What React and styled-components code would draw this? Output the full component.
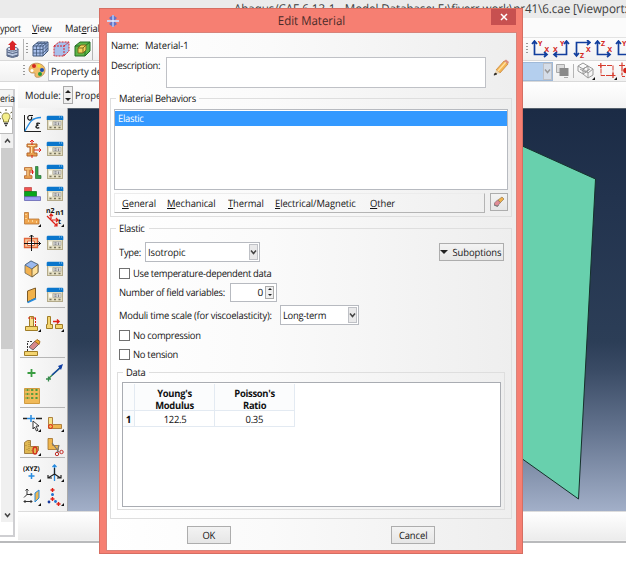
import React from 'react';
import styled, { createGlobalStyle } from 'styled-components';

const Global = createGlobalStyle`
  * { box-sizing: border-box; }
  body { margin: 0; background: #fff; overflow: hidden; }
  fieldset { min-width: 0; }
`;

const Screen = styled.div`
  position: relative;
  width: 626px;
  height: 566px;
  overflow: hidden;
  background: #fff;
  color: #141414;
  font: 10px/14px 'Open Sans', 'Noto Sans', sans-serif;
  text-rendering: geometricPrecision;
  letter-spacing: -0.2px;
  white-space: nowrap;
`;

/* Open Sans is wider than the UI face, so labels are condensed slightly. */
const Label = styled.span`
  display: inline-block;
  flex: none;
  width: ${(p) => (p.$w ? `${p.$w}px` : 'auto')};
  letter-spacing: ${(p) => p.$ls ?? -0.3}px;
  transform: scaleX(${(p) => p.$sx || 0.94});
  transform-origin: ${(p) => (p.$center ? 'center' : 'left')};
`;

const LabelSlot = styled.div`
  flex: none;
  width: ${(p) => p.$w}px;
`;

const MainWindow = styled.div`
  display: flex;
  flex-direction: column;
  height: 543px;
  border-bottom: 2px solid #b9babc;
  background: #fff;
`;

const TitleBar = styled.div`
  height: 18px;
  padding-left: 234px;
  background: #ebebeb;
  color: #3d3d3d;
  font-size: 12.2px;
  line-height: 18px;
`;

const MenuBar = styled.div`
  display: flex;
  align-items: center;
  height: 20px;
  padding-top: 1px;
  background: #fbfbfb;
  border-bottom: 1px solid #e3e3e3;
`;

const Spacer = styled.div`
  flex: none;
  width: ${(p) => p.$w}px;
`;

const Toolbar = styled.div`
  display: flex;
  align-items: center;
  height: ${(p) => p.$h}px;
  padding-left: ${(p) => p.$left || 0}px;
  background: linear-gradient(#fdfdfd, #f1f1f1);
  border-bottom: 1px solid #d9d9d9;
`;

const Grip = styled.div`
  flex: none;
  width: 2px;
  height: 12px;
  background: repeating-linear-gradient(#999 0 1px, transparent 1px 3px);
`;

const Divider = styled.div`
  flex: none;
  width: 1px;
  height: ${(p) => p.$h || 14}px;
  background: #b5b5b5;
`;

const ModuleSelect = styled.div`
  flex: none;
  width: 60px;
  height: 19px;
  padding-left: 2px;
  border: 1px solid #c4c6cc;
  background: #fff;
  line-height: 17px;
`;

const BlueCombo = styled.div`
  display: flex;
  justify-content: flex-end;
  flex: none;
  width: 32px;
  height: 19px;
  border: 1px solid #9fb9d8;
  background: #b4cfee;
`;

const ComboArrow = styled.div`
  display: flex;
  align-items: center;
  justify-content: center;
  flex: none;
  width: 9px;
  border: 1px solid #bfc1c6;
  background: ${(p) => (p.$muted ? '#d5dde8' : '#e9e9ea')};
`;

const Body = styled.div`
  display: flex;
  flex: 1;
  min-height: 0;
`;

const TreePane = styled.div`
  flex: none;
  display: flex;
  flex-direction: column;
  width: 15px;
  height: 448px;
  margin-top: 7px;
  border-right: 2px solid #cfcfd2;
  border-bottom: 2px solid #cfcfd2;
  background: #fff;
`;

const TreeTab = styled.div`
  height: 18px;
  padding-top: 1px;
  border-top: 1px solid #cfcfcf;
  border-bottom: 1px solid #c6c6c6;
  background: #f3f3f3;
`;

const BulbBox = styled.div`
  height: 27px;
  padding-top: 2px;
  border-bottom: 1px solid #bdbdbd;
  border-right: 1px solid #bdbdbd;
`;

const ScrollButton = styled.div`
  display: flex;
  align-items: center;
  justify-content: center;
  height: 14px;
  margin: 0 0 ${(p) => p.$mb || 0}px 1px;
  background: #f0f0f0;
`;

const ScrollTrack = styled.div`
  flex: 1;
  margin-left: 1px;
  background: #f0f0f0;
`;

const ScrollThumb = styled.div`
  height: 201px;
  background: #cdcdcd;
`;

const Workspace = styled.div`
  flex: 1;
  min-width: 0;
  margin-left: 3px;
  background: linear-gradient(90deg, #fcfcfc, #f0f0f0 60px, #f2f2f2);
`;

const ModuleRow = styled.div`
  display: flex;
  align-items: center;
  height: 26px;
  padding-left: 7px;
  background: linear-gradient(#fff, #f3f3f3);
`;

const Spin = styled.div`
  display: flex;
  flex-direction: column;
  align-items: center;
  justify-content: space-around;
  flex: none;
  width: ${(p) => p.$w || 10}px;
  height: ${(p) => p.$h || 18}px;
  border: 1px solid #aaa;
  background: #efefef;
`;

const Caret = styled.div`
  width: 0;
  height: 0;
  border: ${(p) => p.$s || 2}px solid transparent;
  border-width: ${(p) => (p.$up ? `0 ${p.$s || 2}px ${p.$s || 2}px` : `${p.$s || 2}px ${p.$s || 2}px 0`)};
  border-color: ${(p) => (p.$up ? 'transparent transparent #222' : '#222 transparent transparent')};
`;

const Canvas = styled.div`
  display: flex;
  height: 403px;
`;

const Toolbox = styled.div`
  flex: none;
  width: 50px;
  padding: 2px 2px 0 2px;
  border-right: 1px solid #aaa;
  background: linear-gradient(90deg, #fbfbfb, #eee);
`;

const ToolRow = styled.div`
  display: grid;
  grid-template-columns: 23px 22px;
  align-items: center;
  height: ${(p) => p.$h}px;
  padding-left: 3px;
`;

const ToolSeparator = styled.div`
  height: 1px;
  background: #b6b6b6;
`;

const Viewport = styled.div`
  flex: 1;
  border-top: 1px solid #55606c;
  background: linear-gradient(#1b2b45, #22334e 22%, #2c3e57 58%, #3a4b65 65%, #64748f 80%, #a2afc8);
`;

const StatusStrip = styled.div`
  height: 29px;
  border-top: 1px solid #dcdcdc;
  background: linear-gradient(#fff, #ececec);
`;

const Dialog = styled.div`
  position: absolute;
  left: 99px;
  top: 8px;
  width: 424px;
  height: 546px;
  display: flex;
  flex-direction: column;
  padding: 0 5px 5px 6px;
  border: 1px solid #d66e62;
  background: #f67f72;
`;

const DialogTitle = styled.div`
  display: grid;
  grid-template-columns: 26px 1fr 26px;
  align-items: start;
  height: 23px;
  color: #4a2b29;
  font-size: 12.2px;
  line-height: 23px;
  text-align: center;
`;

const TitleIcon = styled.div`
  display: flex;
  padding-top: 5px;
`;

const CloseButton = styled.div`
  display: flex;
  align-items: center;
  justify-content: center;
  width: 25px;
  height: 16px;
  background: #c75050;
`;

const DialogBody = styled.div`
  flex: 1;
  display: flex;
  flex-direction: column;
  padding: 5px 4px 0 3px;
  border: 1px solid #d8837a;
  background: linear-gradient(90deg, #fff, #fafafa 40%, #eee);
`;

const FormRow = styled.div`
  display: flex;
  align-items: ${(p) => p.$align || 'center'};
  height: ${(p) => p.$h}px;
  padding-left: ${(p) => p.$left || 0}px;
`;

const TextArea = styled.div`
  flex: none;
  width: 320px;
  height: 31px;
  border: 1px solid #bfc1c6;
  background: #fff;
`;

const PencilSlot = styled.div`
  padding: 7px 0 0 7px;
`;

const Group = styled.fieldset`
  flex: none;
  height: ${(p) => p.$h}px;
  margin: ${(p) => p.$m || '0'};
  padding: 0 3px;
  border: 1px solid #dedede;
`;

const Legend = styled.legend`
  width: ${(p) => p.$w}px;
  height: 14px;
  margin-left: 2px;
  padding: 0 2px 0 3px;
`;

const ListBox = styled.div`
  height: 81px;
  margin-top: 4px;
  padding: 1px 0;
  border: 1px solid #b7bac0;
  background: #fff;
`;

const SelectedItem = styled.div`
  height: 15px;
  padding-left: 3px;
  background: #3399ff;
  color: #fff;
`;

const BehaviorBar = styled.div`
  display: flex;
  gap: 5px;
  height: 20px;
  margin-top: 3px;
`;

const BehaviorMenu = styled.div`
  display: flex;
  align-items: center;
  width: 371px;
  padding-left: 7px;
  border: 1px solid #ececec;
  border-right-color: #b4b4b4;
  border-bottom-color: #b4b4b4;
`;

const Button = styled.div`
  display: flex;
  align-items: center;
  justify-content: center;
  flex: none;
  width: ${(p) => p.$w}px;
  height: ${(p) => p.$h || 18}px;
  margin-left: ${(p) => p.$ml || 0}px;
  gap: 3px;
  border: 1px solid #adadad;
  background: linear-gradient(#f3f3f3, #e6e6e6);
`;

const Combo = styled.div`
  display: flex;
  justify-content: space-between;
  flex: none;
  width: ${(p) => p.$w}px;
  height: 20px;
  padding: 1px 1px 1px 2px;
  border: 1px solid #b7bac0;
  background: #fff;
  line-height: 16px;
`;

const SpinInput = styled.div`
  display: flex;
  align-items: center;
  justify-content: flex-end;
  gap: 2px;
  width: 47px;
  height: 19px;
  padding-right: 2px;
  border: 1px solid #b7bac0;
  background: #fff;
`;

const CheckBox = styled.div`
  flex: none;
  width: 11px;
  height: 11px;
  margin-right: 3px;
  border: 1px solid #707070;
  background: #fff;
`;

const TableBox = styled.div`
  height: 125px;
  margin: 3px 0 0 1px;
  padding: 1px 0;
  border: 1px solid #a9acb2;
  background: #fff;
`;

const Grid = styled.div`
  display: grid;
  grid-template-columns: 12px 80px 80px;
  grid-template-rows: 27px 16px;
  text-align: center;
`;

const Cell = styled.div`
  padding-top: ${(p) => (p.$head && !p.$row ? 2.5 : 1)}px;
  border-right: 1px solid #e3eaf2;
  border-bottom: 1px solid #e3eaf2;
  background: ${(p) => (p.$head ? '#fbfcfd' : '#fff')};
  color: #111;
  font-weight: ${(p) => (p.$head ? 700 : 400)};
  line-height: ${(p) => (p.$head && !p.$row ? 12 : 14)}px;
`;

const Svg = styled.svg`
  display: block;
  flex: none;
  margin-left: ${(p) => p.$ml || 0}px;
`;

const Icon = ({ w = 18, h = 18, ml, children }) => (
  <Svg width={w} height={h} viewBox={`0 0 ${w} ${h}`} $ml={ml} fill="none">
    {children}
  </Svg>
);

const Chevron = ({ up, color = '#444' }) => (
  <Icon w={7} h={6}>
    <path d={up ? 'M1 4.5L3.5 1.5L6 4.5' : 'M1 1.5L3.5 4.5L6 1.5'} stroke={color} strokeWidth="1.5" />
  </Icon>
);

const Corner = () => <path d="M18 15v3h-3z" fill="#111" />;

const Manager = () => (
  <Icon>
    <path d="M1 4h16v12H1z" fill="#b3aa8a" />
    <path d="M2 6h14v9H2z" fill="#e3ddc2" />
    <path d="M1.500 1.800h15l.8 1V6H.7V2.800z" fill="#0a76cc" />
    <path d="M13 3h1M15 3h1" stroke="#8cc4f0" />
    <path d="M3 7.500h3v4H3z" fill="#fbfaf0" />
    <path d="M7 7.500h8v4H7z" fill="#d5d5d3" stroke="#a8a698" strokeWidth=".6" />
    <path d="M8.500 8.800h2M12.500 8.500v2.500M8.500 10.300h2" stroke="#85858a" />
    <path d="M3.500 13.500h2M8 13.500h2M12.500 13.500h2" stroke="#77735c" strokeWidth="1.500" />
  </Icon>
);

const SigmaIcon = () => (
  <Icon w={20} h={20}>
    <path d="M1.500 2v16.500H18" stroke="#222" />
    <path d="M2 18C7 9 8 5 18 4.500" stroke="#248be0" strokeWidth="1.3" />
    <path d="M10 2.500H6.500a2 2.300 0 1 0 2 1.200" stroke="#111" strokeWidth="1.200" />
    <path d="M17 10.500c-4-1.500-4 1.500-1.500 1.700c-4 .3-3 4 .8 2.500" stroke="#111" strokeWidth="1.300" />
  </Icon>
);

const BeamIcon = ({ load }) => (
  <Icon w={19}>
    <g transform={load ? '' : 'translate(-1.500 1) scale(.75 .9)'}>
      <path d="M4 4h10v3h-3v6h3v3H4v-3h3V7H4z" fill="#e8a050" stroke="#b5652a" />
      <path d="M5 5.500h7M8.500 7v6" stroke="#ffe1a8" />
    </g>
    {load ? (
      <path d="M9 5V0M7 2l2-2 2 2M11 10h7M16 8l2 2-2 2M9 15v3" stroke="#df2118" />
    ) : (
      <>
        <path d="M7 9h4M9.500 7v4" stroke="#df2118" />
        <path d="M12.500 3.500h2.500V12.500H18v3h-5.500z" fill="#36a14a" stroke="#276e35" strokeWidth=".7" />
      </>
    )}
  </Icon>
);

const LayersIcon = () => (
  <Icon w={19}>
    <path d="M1.500 2.500h7v4h-7z" fill="#ef5550" stroke="#b44" strokeWidth=".7" />
    <path d="M1.500 6.500h12v5h-12z" fill="#08a51b" stroke="#087418" strokeWidth=".7" />
    <path d="M1.500 11.700h16v3.800h-16z" fill="#9c9cf5" stroke="#5757a7" strokeWidth=".7" />
  </Icon>
);

const AngleIcon = () => (
  <Icon>
    <path d="M1.500 3.500h4V10H16v5H1.500z" fill="#efa54e" stroke="#b87333" strokeWidth=".8" />
    <path d="M3 5v1M3 9v1M5 12h1M9 12h1M13 13h1" stroke="#ffe4af" strokeWidth="1.500" />
    <Corner />
  </Icon>
);

const MiniText = styled.text`
  fill: ${(p) => p.$c || '#111'};
  font: 700 ${(p) => p.$s || 7}px 'Noto Sans', sans-serif;
  letter-spacing: 0;
`;

const NormalIcon = () => (
  <Icon w={19} h={21}>
    <MiniText x="0" y="6">n2</MiniText>
    <MiniText x="9.500" y="8">n1</MiniText>
    <MiniText x="12" y="17">t</MiniText>
    <path d="M1 9l10 10M11 16v3H8M5 12V7M3.500 9L5 7l2 2M5 13h7M10 11l2 2-2 2" stroke="#df2118" strokeWidth="1.200" />
    <path d="M18 17v3h-3z" fill="#111" />
  </Icon>
);

const CrossBoxIcon = () => (
  <Icon w={19}>
    <path d="M1.500 4.500h13v9h-13z" fill="#f6c89c" stroke="#e2673d" strokeWidth="1.300" />
    <path d="M4.500 7h7v4.500h-7z" fill="#fff" stroke="#e2673d" />
    <path d="M8.500 17V1M6.500 3l2-2 2 2M1 9.500h17M15.500 7.500l2 2-2 2" stroke="#111" />
  </Icon>
);

const CubeIcon = () => (
  <Icon>
    <path d="M2 5l6-4 7 3.500v8L9 17l-7-4z" fill="#f3b250" stroke="#6b6a5d" strokeWidth=".8" />
    <path d="M2 5l6-4 7 3.500L9 9z" fill="#9bb9ee" stroke="#49698f" strokeWidth=".8" />
    <path d="M9 9l6-4.500v8L9 17z" fill="#ffe19b" stroke="#6b542d" strokeWidth=".8" />
  </Icon>
);

const ShellIcon = () => (
  <Icon>
    <path d="M4.500 5l8-3v10l-8 4z" fill="#f1b24b" stroke="#7d5b28" />
    <path d="M4.500 16.500l8.500-4" stroke="#258be0" strokeWidth="1.800" />
  </Icon>
);

const StampIcon = () => (
  <Icon>
    <path d="M2.500 12.500h12v4h-12z" fill="#f4d570" stroke="#a07d27" />
    <path d="M6.500 2.500h4v10h-4z" fill="#f6df8a" stroke="#a07d27" />
    <path d="M5 4h8M12.500 4v8" stroke="#df2118" strokeDasharray="2 1" />
    <Corner />
  </Icon>
);

const MoveIcon = () => (
  <Icon>
    <path d="M1.500 2.500h3v8h2v4h-6v-4h1zM9.500 10.500h7v4h-7z" fill="#f4d570" stroke="#a07d27" />
    <path d="M7 7.500h6M11 5.500l2 2-2 2" stroke="#df2118" strokeWidth="1.500" />
    <Corner />
  </Icon>
);

const EraseStampIcon = () => (
  <Icon>
    <path d="M1.500 12.500h13v4h-13z" fill="#f4d570" stroke="#a07d27" />
    <path d="M4.500 12V2.500h5" stroke="#333" strokeDasharray="2 1" />
    <path d="M6 8l6-6 4 3-6 6z" fill="#d6888a" stroke="#6e6569" />
    <path d="M12 2.500l2-2 3 2-1 3z" fill="#f1aa34" stroke="#a46c20" />
  </Icon>
);

const PlusIcon = () => (
  <Icon>
    <path d="M8.500 5v8M4.500 9h8" stroke="#3a9d42" strokeWidth="1.800" />
  </Icon>
);

const LineIcon = () => (
  <Icon>
    <path d="M2 15L15 3M0 15h5M2.500 12.500v5" stroke="#368b4c" strokeWidth="1.300" />
    <path d="M6 11L15 3" stroke="#1646a1" strokeWidth="1.500" />
    <path d="M17 0l-5 2 3 4z" fill="#123fa4" />
  </Icon>
);

const MatrixIcon = () => (
  <Icon>
    <path d="M1.500 .500h15v15h-15z" fill="#f0b958" stroke="#d09c41" />
    <path d="M4.500 1v10M9 1v10M13.500 1v10" stroke="#4c9b3b" strokeWidth="1.800" strokeDasharray="2 2" />
    <path d="M2 2h14M2 6h14M2 10h14" stroke="#73a045" strokeWidth=".8" strokeDasharray="1 1" />
  </Icon>
);

const PickIcon = () => (
  <Icon w={19}>
    <path d="M0 4.500h4M13 4.500h6" stroke="#222" strokeWidth="1.500" />
    <path d="M4 4.500h8M8 1v7" stroke="#278be0" strokeWidth="1.500" />
    <path d="M10 7l6 5-3 .2 2 4-1.500.8-2-4-1.500 2z" fill="#fff" stroke="#222" strokeWidth=".9" />
    <Corner />
  </Icon>
);

const BracketIcon = () => (
  <Icon>
    <path d="M2.500 3.500h4v7h9v4h-13z" fill="#efb64f" stroke="#a06e29" strokeWidth=".8" />
    <path d="M3 4h3v6H3z" fill="#f6e48b" />
    <circle cx="4.500" cy="12.500" r="2" stroke="#df2118" />
    <Corner />
  </Icon>
);

const SolidIcon = () => (
  <Icon>
    <path d="M1.500 4.500l3-2h3v6h8v4l-3 3h-11z" fill="#e0b852" stroke="#8f692b" strokeWidth=".8" />
    <path d="M6 4v9M3 7v1M4 11v1M9 12v1" stroke="#a98535" strokeDasharray="1 1" />
    <ellipse cx="12" cy="12.500" rx="2" ry="3.500" stroke="#d4321f" strokeWidth="1.400" />
    <Corner />
  </Icon>
);

const CutIcon = () => (
  <Icon>
    <path d="M2 .500h4.500v7h6v4H2z" fill="#efb64f" stroke="#a06e29" strokeWidth=".8" />
    <path d="M6 5l7 9M13 7l-2 8" stroke="#777" strokeWidth="1.200" />
    <circle cx="11" cy="16" r="1.700" stroke="#c22d28" />
    <circle cx="15.500" cy="14" r="1.700" stroke="#c22d28" />
  </Icon>
);

const XyzIcon = () => (
  <Icon w={20}>
    <MiniText x="0" y="6.500" $s={6.500}>(XYZ)</MiniText>
    <path d="M8.500 9v6M5.500 12h6" stroke="#278be0" strokeWidth="1.500" />
    <Corner />
  </Icon>
);

const AxesIcon = () => (
  <Icon>
    <path d="M8.500 17V1M6.500 3l2-2 2 2" stroke="#278be0" strokeWidth="1.300" />
    <path d="M8.500 10L2 14M8.500 10l6 4M8.500 10V4M2 11v3h4M11 14h4v-3" stroke="#222" strokeWidth="1.200" />
    <Corner />
  </Icon>
);

const PlaneIcon = () => (
  <Icon>
    <path d="M4 7V1M2.500 2.500L4 1l1.500 1.500M4 6.500h5M7.500 5L9 6.500 7.500 8M4 6.500L1 9.500M1 13.500h8M2.500 12L1 13.500 2.500 15M7.500 12L9 13.500 7.500 15" stroke="#333" />
    <path d="M12 5l4-3v8l-4 4z" fill="#efb64f" stroke="#278be0" />
    <Corner />
  </Icon>
);

const PointsIcon = () => (
  <Icon>
    <path d="M6.500 0v4M4.500 2h4M6.500 9v4M4.500 11h4M12.500 14v4M10.500 16h4" stroke="#df2118" strokeWidth="1.400" />
    <circle cx="6.500" cy="6.500" r="1.500" fill="#2072d0" />
    <circle cx="3" cy="14" r="1.400" fill="#173a9e" />
    <circle cx="9.500" cy="13.500" r="1.400" fill="#2072d0" />
    <Corner />
  </Icon>
);

const DatabaseIcon = () => (
  <Icon w={15} h={19}>
    <path d="M2 9v7q5.500 3 11 0V9" fill="#b9c7df" stroke="#526181" />
    <path d="M2 12q5.500 3 11 0M2 15q5.500 3 11 0" stroke="#526181" />
    <ellipse cx="7.500" cy="9" rx="5.500" ry="2" fill="#dce4f3" stroke="#526181" />
    <path d="M5 10V5H3l4.500-4.500L12 5h-2v5z" fill="#d92528" />
  </Icon>
);

const MeshCube = ({ fill = '#a8bfeb', stroke = '#43597a', variant }) => (
  <Icon w={17}>
    <path d="M1 6l5-4h10v9l-5 5H1z" fill={fill} stroke={stroke} strokeDasharray={variant === 'points' ? '2 1' : ''} />
    <path d="M1 6h10v10M11 6l5-4" stroke={stroke} strokeDasharray={variant === 'points' ? '2 1' : ''} />
    {!variant && <path d="M4.500 6v10M8 6v10M1 9.500h10l5-5M1 13h10l5-5M4 3.500h10v9M4.500 6l5-4M8 6l5-4" stroke={stroke} strokeWidth=".8" />}
    {variant === 'nested' && <path d="M4 8l3-3h5v5l-3 3H4zM4 8h5v5M9 8l3-3" fill="#f4d15c" stroke="#7f6c1e" />}
  </Icon>
);

const PaletteIcon = () => (
  <Icon>
    <path d="M3 3c5-4 14-1 14 5c0 7-9 9-10 6c-.5-2 1-3-1-3c-6 1-6-5-3-8z" fill="#f1bd69" stroke="#b98a50" strokeWidth=".8" />
    <circle cx="6" cy="4" r="2" fill="#d4281e" />
    <circle cx="11" cy="4" r="1.800" fill="#f1e33a" />
    <circle cx="14" cy="8" r="2" fill="#1b4fb3" />
    <circle cx="12" cy="12" r="2" fill="#239a3b" />
    <circle cx="4" cy="8.500" r="1.500" fill="#fff" />
  </Icon>
);

const BulbIcon = () => (
  <Icon w={12} h={20}>
    <path d="M3.500 11C1 8 2 4 6 4s5 4 2.500 7v2h-5z" fill="#f4ee8a" stroke="#86803e" />
    <path d="M4 14.500h4M5 16.500h2" stroke="#444" strokeWidth="1.500" />
    <path d="M6 0v2M0 3l1.500 1M12 3l-1.500 1M0 10l1-.5M12 10l-1-.5" stroke="#55512c" />
  </Icon>
);

const arrows = {
  right: 'M3.500 2V14.500H15M1 4L3.500 1L6 4M13 12l3 2.500L13 17',
  left: 'M14.500 2V14.500H3M12 4l2.500-3L17 4M5 12l-3 2.500L5 17',
  down: 'M3.500 15V2.500H16M1 13l2.500 3L6 13M14 0l3 2.500L14 5',
};

const ViewIcon = ({ dir = 'right', a, b, ap, bp }) => (
  <Icon ml={3}>
    <path d={arrows[dir]} stroke="#123f9e" strokeWidth="1.700" />
    <MiniText x={ap[0]} y={ap[1]} $c="#d3261c">{a}</MiniText>
    <MiniText x={bp[0]} y={bp[1]} $c="#d3261c">{b}</MiniText>
  </Icon>
);

const OverlapIcon = () => (
  <Icon w={13} h={16} ml={3}>
    <path d="M.5 1.500h8v8h-8z" fill="#ddd" stroke="#aaa" />
    <path d="M3.500 5h9v8h-9z" fill="#8a8a8a" />
    <path d="M8 14.500h4" stroke="#aaa" />
  </Icon>
);

const CubesIcon = () => (
  <Icon ml={3}>
    <path d="M1 4l5-3 5 3v5l-5 3-5-3zM1 4l5 3 5-3M6 7v5M6 7l5-3 5 3v6l-5 3-5-4M6 7l5 4 5-4M11 11v5M3 7l5 3 5-3" stroke="#999" strokeWidth="1" />
    <Corner />
  </Icon>
);

const SelectRectIcon = () => (
  <Icon w={19} ml={3}>
    <path d="M3 3.500h12v10H3z" stroke="#d63c2e" strokeDasharray="5 1" />
    <path d="M0 3.500h5M2.800 1v5M12.500 13.500h5M15 11v5" stroke="#d63c2e" strokeWidth="1.200" />
    <path d="M19 15v3h-3z" fill="#111" />
  </Icon>
);

const SelectDotIcon = () => (
  <Icon ml={2}>
    <path d="M3 3.500h12v11H3zM0 3.500h6M3 .5v6" stroke="#d63c2e" strokeWidth="1.200" strokeDasharray="3 1" />
    <circle cx="7" cy="8.500" r="2.800" fill="#d3261c" />
  </Icon>
);

const PencilIcon = () => (
  <Icon w={16} h={17}>
    <path d="M3 11L11 2l4 3-8 9z" fill="#f4b653" stroke="#c17b34" strokeWidth=".7" />
    <path d="M5 12l8-9" stroke="#ffe1a3" strokeWidth="1.300" />
    <path d="M11 2l2-1.500L16 3l-1 2z" fill="#dd8f7d" />
    <path d="M3 11l4 3-6 2z" fill="#ead5b4" />
    <path d="M2 14l2 1-3 1.200z" fill="#111" stroke="#111" strokeWidth=".5" />
  </Icon>
);

const EraserIcon = () => (
  <Icon w={12} h={12}>
    <path d="M1.500 7l3-3 3 2.500-3 3.500-3-1z" fill="#e08b94" stroke="#765e68" strokeWidth=".6" />
    <path d="M5 4l4-3 2 2-3.500 3.500z" fill="#f0b24a" stroke="#886c49" strokeWidth=".6" />
    <path d="M1 9l3.500 1.500L5.500 9" stroke="#777" />
  </Icon>
);

const AbaqusIcon = () => (
  <Icon w={14} h={14}>
    <path d="M7 1L11 4 9 6h4v2H9l2 2-4 3-4-3 2-2H1V6h4L3 4z" fill="#6574c4" />
    <path d="M7 1v12" stroke="#9fb5ef" strokeWidth="2" />
    <path d="M1 7h12" stroke="#f5f3ff" strokeWidth="1.500" />
  </Icon>
);

const toolGroups = [
  [
    [26, SigmaIcon, Manager],
    [26, () => <BeamIcon load />, Manager],
    [20, () => <BeamIcon />, Manager],
    [24, LayersIcon, Manager],
    [23, AngleIcon, NormalIcon],
    [27, CrossBoxIcon, Manager],
    [26, CubeIcon, Manager],
    [25, ShellIcon, Manager],
  ],
  [
    [30, StampIcon, MoveIcon],
    [19, EraseStampIcon, null],
  ],
  [
    [29, PlusIcon, LineIcon],
    [20, MatrixIcon, null],
  ],
  [
    [29, PickIcon, BracketIcon],
    [20, SolidIcon, CutIcon],
  ],
  [
    [29, XyzIcon, AxesIcon],
    [20, PlaneIcon, PointsIcon],
  ],
];

const behaviorMenus = [
  ['G', 'eneral', 45],
  ['M', 'echanical', 61],
  ['T', 'hermal', 47],
  ['E', 'lectrical/Magnetic', 95],
  ['O', 'ther', 30],
];

const EditMaterialDialog = () => (
  <Dialog>
    <DialogTitle>
      <TitleIcon><AbaqusIcon /></TitleIcon>
      <Label $center $ls={0}>Edit Material</Label>
      <CloseButton>
        <Icon w={8} h={8}><path d="M1 1l6 6M7 1L1 7" stroke="#fff" strokeWidth="1.500" /></Icon>
      </CloseButton>
    </DialogTitle>
    <DialogBody>
      <FormRow $h={14} $left={1}>
        <LabelSlot $w={34}><Label>Name:</Label></LabelSlot>
        <Label $ls={-0.1}>Material-1</Label>
      </FormRow>
      <FormRow $h={39} $left={1} $align="flex-start">
        <LabelSlot $w={55}>
          <FormRow $h={26}><Label>Description:</Label></FormRow>
        </LabelSlot>
        <FormRow $h={41}><TextArea /></FormRow>
        <PencilSlot><PencilIcon /></PencilSlot>
      </FormRow>
      <Group $h={126}>
        <Legend $w={83}><Label>Material Behaviors</Label></Legend>
        <ListBox><SelectedItem><Label>Elastic</Label></SelectedItem></ListBox>
        <BehaviorBar>
          <BehaviorMenu>
            {behaviorMenus.map(([key, rest, w]) => (
              <LabelSlot key={key} $w={w}><Label $ls={-0.1}><u>{key}</u>{rest}</Label></LabelSlot>
            ))}
          </BehaviorMenu>
          <Button $w={18}><EraserIcon /></Button>
        </BehaviorBar>
      </Group>
      <Group $h={298} $m="4px 0 0">
        <Legend $w={33}><Label>Elastic</Label></Legend>
        <FormRow $h={33} $left={5}>
          <LabelSlot $w={26}><Label>Type:</Label></LabelSlot>
          <Combo $w={115}><Label $ls={-0.1}>Isotropic</Label><ComboArrow><Chevron /></ComboArrow></Combo>
          <Button $w={65} $ml={179}><Caret $s={4} /><Label $center $ls={-0.1}>Suboptions</Label></Button>
        </FormRow>
        <FormRow $h={10} $left={5}><CheckBox /><Label $ls={-0.33}>Use temperature-dependent data</Label></FormRow>
        <FormRow $h={28} $left={5}>
          <LabelSlot $w={111}><Label>Number of field variables:</Label></LabelSlot>
          <SpinInput>0<Spin $w={9} $h={13}><Caret $up /><Caret /></Spin></SpinInput>
        </FormRow>
        <FormRow $h={17} $left={5}>
          <LabelSlot $w={161}><Label $ls={-0.25}>Moduli time scale (for viscoelasticity):</Label></LabelSlot>
          <Combo $w={79}><Label>Long-term</Label><ComboArrow><Chevron /></ComboArrow></Combo>
        </FormRow>
        <FormRow $h={24} $left={5}><CheckBox /><Label>No compression</Label></FormRow>
        <FormRow $h={14} $left={5}><CheckBox /><Label>No tension</Label></FormRow>
        <Group $h={145} $m="4px 3px 0">
          <Legend $w={26}><Label>Data</Label></Legend>
          <TableBox>
            <Grid>
              <Cell $head />
              <Cell $head><Label $center>Young's<br />Modulus</Label></Cell>
              <Cell $head><Label $center>Poisson's<br />Ratio</Label></Cell>
              <Cell $head $row>1</Cell>
              <Cell><Label $center>122.5</Label></Cell>
              <Cell><Label $center>0.35</Label></Cell>
            </Grid>
          </TableBox>
        </Group>
      </Group>
      <FormRow $h={31} $left={77}>
        <Button $w={44}><Label $center>OK</Label></Button>
        <Button $w={44} $ml={160}><Label $center $ls={-0.1}>Cancel</Label></Button>
      </FormRow>
    </DialogBody>
  </Dialog>
);

export default function App() {
  return (
    <Screen>
      <Global />
      <MainWindow>
        <TitleBar>
          <Label $ls={-0.1} $sx={0.957}>Abaqus/CAE 6.13-1 - Model Database: E:\fiverr work\pr41\6.cae [Viewport:</Label>
        </TitleBar>
        <MenuBar>
          <LabelSlot $w={32}><Label $sx={0.9}>yport</Label></LabelSlot>
          <LabelSlot $w={33}><Label>{<u>V</u>}iew</Label></LabelSlot>
          <Label $ls={-0.2}>Mat<u>e</u>rial</Label>
        </MenuBar>
        <Toolbar $h={23} $left={5}>
          <DatabaseIcon />
          <Spacer $w={3} />
          <Divider $h={21} />
          <Spacer $w={2} />
          <Grip />
          <Spacer $w={4} />
          <MeshCube />
          <Spacer $w={4} />
          <MeshCube variant="points" stroke="#d9232b" />
          <Spacer $w={4} />
          <MeshCube variant="nested" fill="#5cb446" stroke="#256e25" />
          <Spacer $w={1} />
          <Divider $h={21} />
          <Spacer $w={433} />
          <Grip />
          <ViewIcon a="Y" b="X" ap={[7, 6]} bp={[13.5, 12]} />
          <ViewIcon dir="left" a="Y" b="X" ap={[8, 6]} bp={[1, 12]} />
          <ViewIcon dir="down" a="X" b="Z" ap={[13, 12]} bp={[7, 18]} />
          <ViewIcon a="Z" b="X" ap={[7, 6]} bp={[13.5, 12]} />
          <ViewIcon a="Y" b="Z" ap={[7, 6]} bp={[13.5, 12]} />
        </Toolbar>
        <Toolbar $h={21} $left={23}>
          <Grip />
          <Spacer $w={3} />
          <PaletteIcon />
          <Spacer $w={2} />
          <ModuleSelect><Label $ls={-0.1} $sx={0.95}>Property defaults</Label></ModuleSelect>
          <Spacer $w={413} />
          <BlueCombo><ComboArrow $muted><Chevron color="#999" /></ComboArrow></BlueCombo>
          <OverlapIcon />
          <Spacer $w={4} />
          <Divider />
          <CubesIcon />
          <SelectRectIcon />
          <SelectDotIcon />
        </Toolbar>
        <Body>
          <TreePane>
            <TreeTab><Label $sx={0.88}>eria</Label></TreeTab>
            <BulbBox><BulbIcon /></BulbBox>
            <ScrollButton><Chevron up /></ScrollButton>
            <ScrollTrack><ScrollThumb /></ScrollTrack>
            <ScrollButton $mb={13}><Chevron /></ScrollButton>
          </TreePane>
          <Workspace>
            <ModuleRow>
              <LabelSlot $w={38}><Label $ls={0}>Module:</Label></LabelSlot>
              <Spin><Caret $s={3} $up /><Caret $s={3} /></Spin>
              <Spacer $w={2} />
              <Label $ls={0}>Property</Label>
            </ModuleRow>
            <Canvas>
              <Toolbox>
                {toolGroups.map((rows, g) => (
                  <React.Fragment key={g}>
                    {g > 0 && <ToolSeparator />}
                    {rows.map(([h, A, B], i) => (
                      <ToolRow key={i} $h={h}><A />{B && <B />}</ToolRow>
                    ))}
                  </React.Fragment>
                ))}
              </Toolbox>
              <Viewport>
                <Svg width="558" height="402" viewBox="68 109 558 402">
                  <path d="M500 136L595.500 179L578.500 499L500 443Z" fill="#68d0ad" stroke="#15302b" />
                </Svg>
              </Viewport>
            </Canvas>
            <StatusStrip />
          </Workspace>
        </Body>
      </MainWindow>
      <EditMaterialDialog />
    </Screen>
  );
}
